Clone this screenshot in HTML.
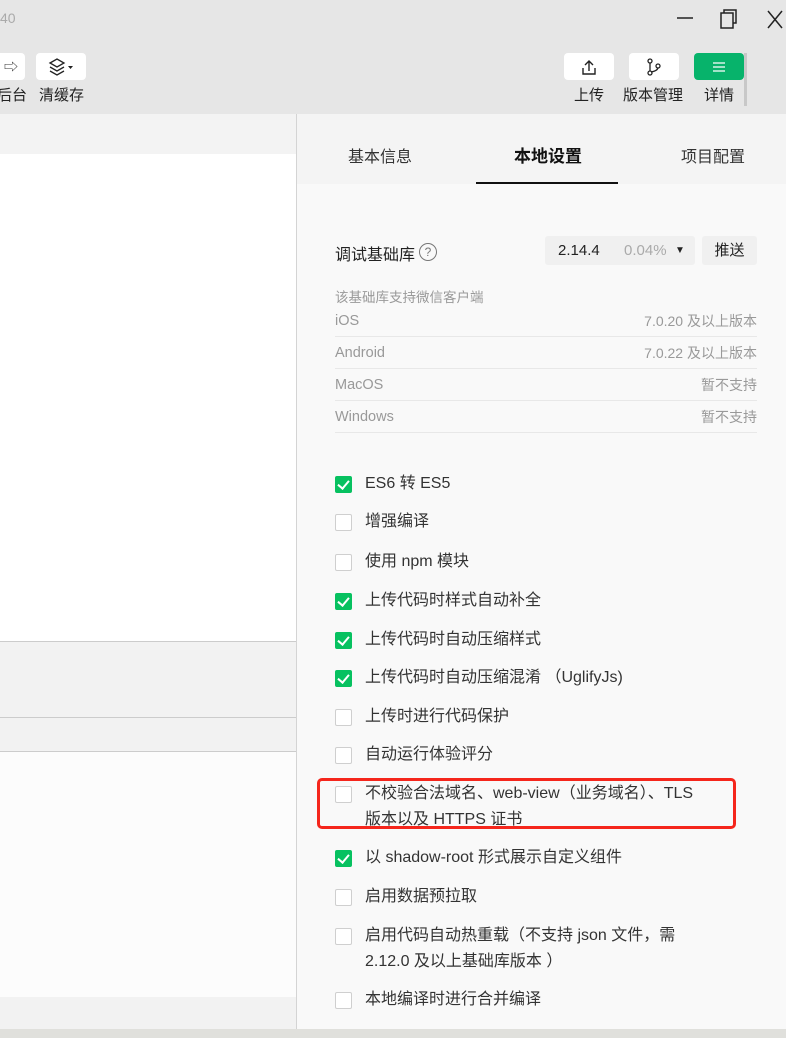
<!DOCTYPE html>
<html><head><meta charset="utf-8"><style>
*{margin:0;padding:0;box-sizing:border-box}
body{width:786px;height:1038px;overflow:hidden;position:relative;background:#e6e6e6;font-family:"Liberation Sans","Noto Sans CJK SC",sans-serif;color:#333}
.a{position:absolute}
.btn{position:absolute;top:53px;width:50px;height:27px;background:#fff;border-radius:4px;display:flex;align-items:center;justify-content:center}
.lbl{position:absolute;top:86px;font-size:15px;color:#222;line-height:20px;white-space:nowrap}
.cb{position:absolute;left:335px;width:17px;height:17px;border:1px solid #cfcfcf;border-radius:2px;background:#fff}
.cb.on{background:#07c160;border-color:#07c160}
.cb.on::after{content:"";position:absolute;left:4px;top:1px;width:5px;height:9px;border:solid #fff;border-width:0 2px 2px 0;transform:rotate(40deg)}
.t{position:absolute;left:365px;font-size:16px;color:#333;line-height:26px;white-space:nowrap}
.row{position:absolute;left:335px;width:422px;height:32px;border-bottom:1px solid #e8e8e8;font-size:14.5px;color:#999;line-height:32px}
.row span{position:absolute;right:0;font-size:14px}
</style></head><body>
<div class="a" style="left:0;top:10px;font-size:14px;color:#aaa">40</div>
<svg class="a" style="left:676px;top:8px" width="110" height="24"><path d="M1 10H17" stroke="#222" stroke-width="1.5"/><rect x="45" y="5" width="12" height="15" fill="none" stroke="#222" stroke-width="1.5"/><path d="M48 5V2H60V15H57" fill="none" stroke="#222" stroke-width="1.5"/><path d="M92 3L106 20M106 3L92 20" stroke="#222" stroke-width="1.5"/></svg>
<div class="btn" style="left:-25px;width:50px"><span style="margin-left:22px;font-size:14px">⇨</span></div>
<div class="btn" style="left:36px"><svg width="30" height="20"><path d="M4 6L11 2L18 6L11 10Z M4 10L11 14L18 10 M4 14L11 18L18 14" fill="none" stroke="#222" stroke-width="1.3"/><path d="M22 9h5l-2.5 3z" fill="#222"/></svg></div>
<div class="lbl" style="left:-3px">后台</div>
<div class="lbl" style="left:39px">清缓存</div>
<div class="btn" style="left:564px"><svg width="18" height="18"><path d="M3 10V16H15V10M9 13V3M5 7L9 3L13 7" fill="none" stroke="#222" stroke-width="1.4"/></svg></div>
<div class="btn" style="left:629px"><svg width="18" height="18"><circle cx="5" cy="3" r="2" fill="none" stroke="#222" stroke-width="1.3"/><circle cx="5" cy="15" r="2" fill="none" stroke="#222" stroke-width="1.3"/><circle cx="13" cy="8" r="2" fill="none" stroke="#222" stroke-width="1.3"/><path d="M5 5V13M13 10Q12 13 6 14" fill="none" stroke="#222" stroke-width="1.3"/></svg></div>
<div class="btn" style="left:694px;background:#07b36b"><svg width="16" height="14"><path d="M2 3H14M2 7H14M2 11H14" stroke="#fff" stroke-width="1.3"/></svg></div>
<div class="a" style="left:744px;top:53px;width:3px;height:53px;background:#c8c8c8"></div>
<div class="lbl" style="left:574px">上传</div>
<div class="lbl" style="left:623px">版本管理</div>
<div class="lbl" style="left:704px">详情</div>
<div class="a" style="left:0;top:114px;width:297px;height:40px;background:#f3f3f3"></div>
<div class="a" style="left:0;top:154px;width:297px;height:487px;background:#fff"></div>
<div class="a" style="left:0;top:641px;width:297px;height:1px;background:#ccc"></div>
<div class="a" style="left:0;top:642px;width:297px;height:75px;background:#f2f2f2"></div>
<div class="a" style="left:0;top:717px;width:297px;height:1px;background:#ccc"></div>
<div class="a" style="left:0;top:718px;width:297px;height:33px;background:#f2f2f2"></div>
<div class="a" style="left:0;top:751px;width:297px;height:1px;background:#ccc"></div>
<div class="a" style="left:0;top:752px;width:297px;height:245px;background:#fcfcfc"></div>
<div class="a" style="left:0;top:997px;width:297px;height:32px;background:#f2f2f2"></div>
<div class="a" style="left:0;top:1029px;width:786px;height:9px;background:#e0e0dc"></div>
<div class="a" style="left:296px;top:114px;width:490px;height:915px;background:#f9f9f9;border-left:1px solid #d4d4d4"></div>
<div class="a" style="left:297px;top:114px;width:489px;height:70px;background:#f4f4f4"></div>
<div class="a" style="left:348px;top:143px;font-size:16px;color:#333">基本信息</div>
<div class="a" style="left:514px;top:142px;font-size:17px;color:#111;font-weight:bold">本地设置</div>
<div class="a" style="left:681px;top:143px;font-size:16px;color:#333">项目配置</div>
<div class="a" style="left:476px;top:182px;width:142px;height:2px;background:#111"></div>
<div class="a" style="left:335px;top:241px;font-size:16px;color:#222">调试基础库</div>
<div class="a" style="left:419px;top:243px;width:18px;height:18px;border:1px solid #777;border-radius:50%;font-size:12px;color:#777;text-align:center;line-height:16px">?</div>
<div class="a" style="left:545px;top:236px;width:150px;height:29px;background:#f0f0f0;border-radius:3px;font-size:15px;line-height:29px"><span style="position:absolute;left:13px;color:#222">2.14.4</span><span style="position:absolute;left:79px;color:#aaa">0.04%</span><span style="position:absolute;left:130px;font-size:10px;color:#222">▼</span></div>
<div class="a" style="left:702px;top:236px;width:55px;height:29px;background:#f0f0f0;border-radius:3px;font-size:15px;line-height:29px;text-align:center;color:#222">推送</div>
<div class="a" style="left:335px;top:286px;font-size:13.5px;color:#999">该基础库支持微信客户端</div>
<div class="row" style="top:305px">iOS<span>7.0.20 及以上版本</span></div>
<div class="row" style="top:337px">Android<span>7.0.22 及以上版本</span></div>
<div class="row" style="top:369px">MacOS<span>暂不支持</span></div>
<div class="row" style="top:401px">Windows<span>暂不支持</span></div>

<div class="cb on" style="top:476px"></div><div class="t" style="top:471px">ES6 转 ES5</div>
<div class="cb" style="top:514px"></div><div class="t" style="top:509px">增强编译</div>
<div class="cb" style="top:554px"></div><div class="t" style="top:549px">使用 npm 模块</div>
<div class="cb on" style="top:593px"></div><div class="t" style="top:588px">上传代码时样式自动补全</div>
<div class="cb on" style="top:632px"></div><div class="t" style="top:627px">上传代码时自动压缩样式</div>
<div class="cb on" style="top:670px"></div><div class="t" style="top:665px">上传代码时自动压缩混淆 （UglifyJs)</div>
<div class="cb" style="top:709px"></div><div class="t" style="top:704px">上传时进行代码保护</div>
<div class="cb" style="top:747px"></div><div class="t" style="top:742px">自动运行体验评分</div>
<div class="cb" style="top:786px"></div><div class="t" style="top:781px">不校验合法域名、web-view（业务域名）、TLS<br>版本以及 HTTPS 证书</div>
<div class="a" style="left:317px;top:778px;width:419px;height:51px;border:3px solid #f5261c;border-radius:5px"></div>
<div class="cb on" style="top:850px"></div><div class="t" style="top:845px">以 shadow-root 形式展示自定义组件</div>
<div class="cb" style="top:889px"></div><div class="t" style="top:884px">启用数据预拉取</div>
<div class="cb" style="top:928px"></div><div class="t" style="top:923px">启用代码自动热重载（不支持 json 文件，需<br>2.12.0 及以上基础库版本 ）</div>
<div class="cb" style="top:992px"></div><div class="t" style="top:987px">本地编译时进行合并编译</div>
</body></html>
